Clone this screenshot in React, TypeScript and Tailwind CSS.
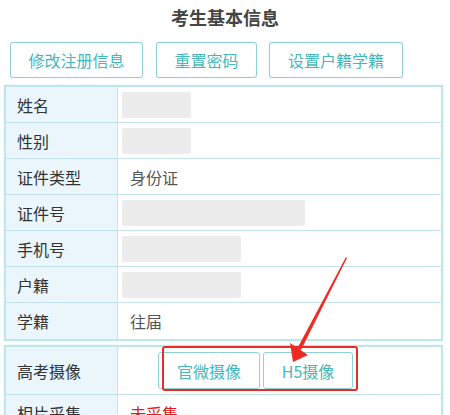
const rows: { label: string; value?: string; blank?: number }[] = [
  { label: "姓名", blank: 69 },
  { label: "性别", blank: 69 },
  { label: "证件类型", value: "身份证" },
  { label: "证件号", blank: 183 },
  { label: "手机号", blank: 119 },
  { label: "户籍", blank: 119 },
  { label: "学籍", value: "往届" },
];

const font = { fontFamily: '"Noto Sans CJK SC", "Noto Sans", sans-serif' };

const TopButton = ({ text, className }: { text: string; className: string }) => (
  <button
    className={`h-[36px] rounded-[3px] border border-[#8ed2d2] bg-white text-[16px] text-[#45b8bc] shadow-[0_0_1px_#bfe6e6] ${className}`}
  >
    {text}
  </button>
);

const Label = ({ text }: { text: string }) => (
  <div className="w-[112px] shrink-0 flex items-center pl-[11px] bg-[#eaf5fc] border-r border-[#c4e4ec] text-[16px] text-[#333]">
    {text}
  </div>
);

export default function App() {
  return (
    <div className="relative w-[450px] h-[415px] overflow-hidden bg-white" style={font}>
      <h1 className="pt-[4px] h-[42px] text-center text-[18px] font-bold text-[#444]">考生基本信息</h1>

      <div className="flex pl-[10px]">
        <TopButton text="修改注册信息" className="w-[133px]" />
        <TopButton text="重置密码" className="ml-[13px] w-[101px]" />
        <TopButton text="设置户籍学籍" className="ml-[12px] w-[134px]" />
      </div>

      <div className="mt-[7px] ml-[4px] w-[439px] border-2 border-[#bfe7ea] shadow-[0_0_2px_#d6f0f2]">
        {rows.map((r, i) => (
          <div
            key={r.label}
            className={`flex h-[36px] ${i < rows.length - 1 ? "border-b border-[#c4e4ec]" : ""}`}
          >
            <Label text={r.label} />
            <div className="flex-1 flex items-center">
              {r.blank ? (
                <div className="ml-[4px] h-[26px] rounded-[2px] bg-[#ececec]" style={{ width: r.blank }} />
              ) : (
                <span className="pl-[12px] text-[16px] text-[#555]">{r.value}</span>
              )}
            </div>
          </div>
        ))}
      </div>

      <div className="mt-[4px] ml-[4px] w-[439px] border-2 border-[#bfe7ea] shadow-[0_0_2px_#d6f0f2]">
        <div className="flex h-[48px] border-b border-[#c4e4ec]">
          <Label text="高考摄像" />
          <div className="flex-1 flex items-center gap-[3px] pl-[40px]">
            <button className="h-[37px] w-[102px] rounded-[3px] border border-[#8ed2d2] text-[16px] text-[#45b8bc]">官微摄像</button>
            <button className="h-[37px] w-[90px] rounded-[3px] border border-[#8ed2d2] text-[16px] text-[#45b8bc]">H5摄像</button>
          </div>
        </div>
        <div className="flex h-[36px]">
          <Label text="相片采集" />
          <div className="flex-1 flex items-center">
            <span className="pl-[12px] text-[16px] text-[#d9201a]">未采集</span>
          </div>
        </div>
      </div>

      {/* annotation overlay */}
      <div className="absolute left-[162px] top-[346px] w-[196px] h-[45px] rounded-[3px] border-2 border-[#ea2a24]" />
      <svg className="absolute left-0 top-0" width="450" height="415" viewBox="0 0 450 415">
        <polygon points="346,257 347,258 301,350 297,349" fill="#ef2a22" />
        <polygon points="293,362 290,343 308,355" fill="#ef2a22" />
      </svg>
    </div>
  );
}
